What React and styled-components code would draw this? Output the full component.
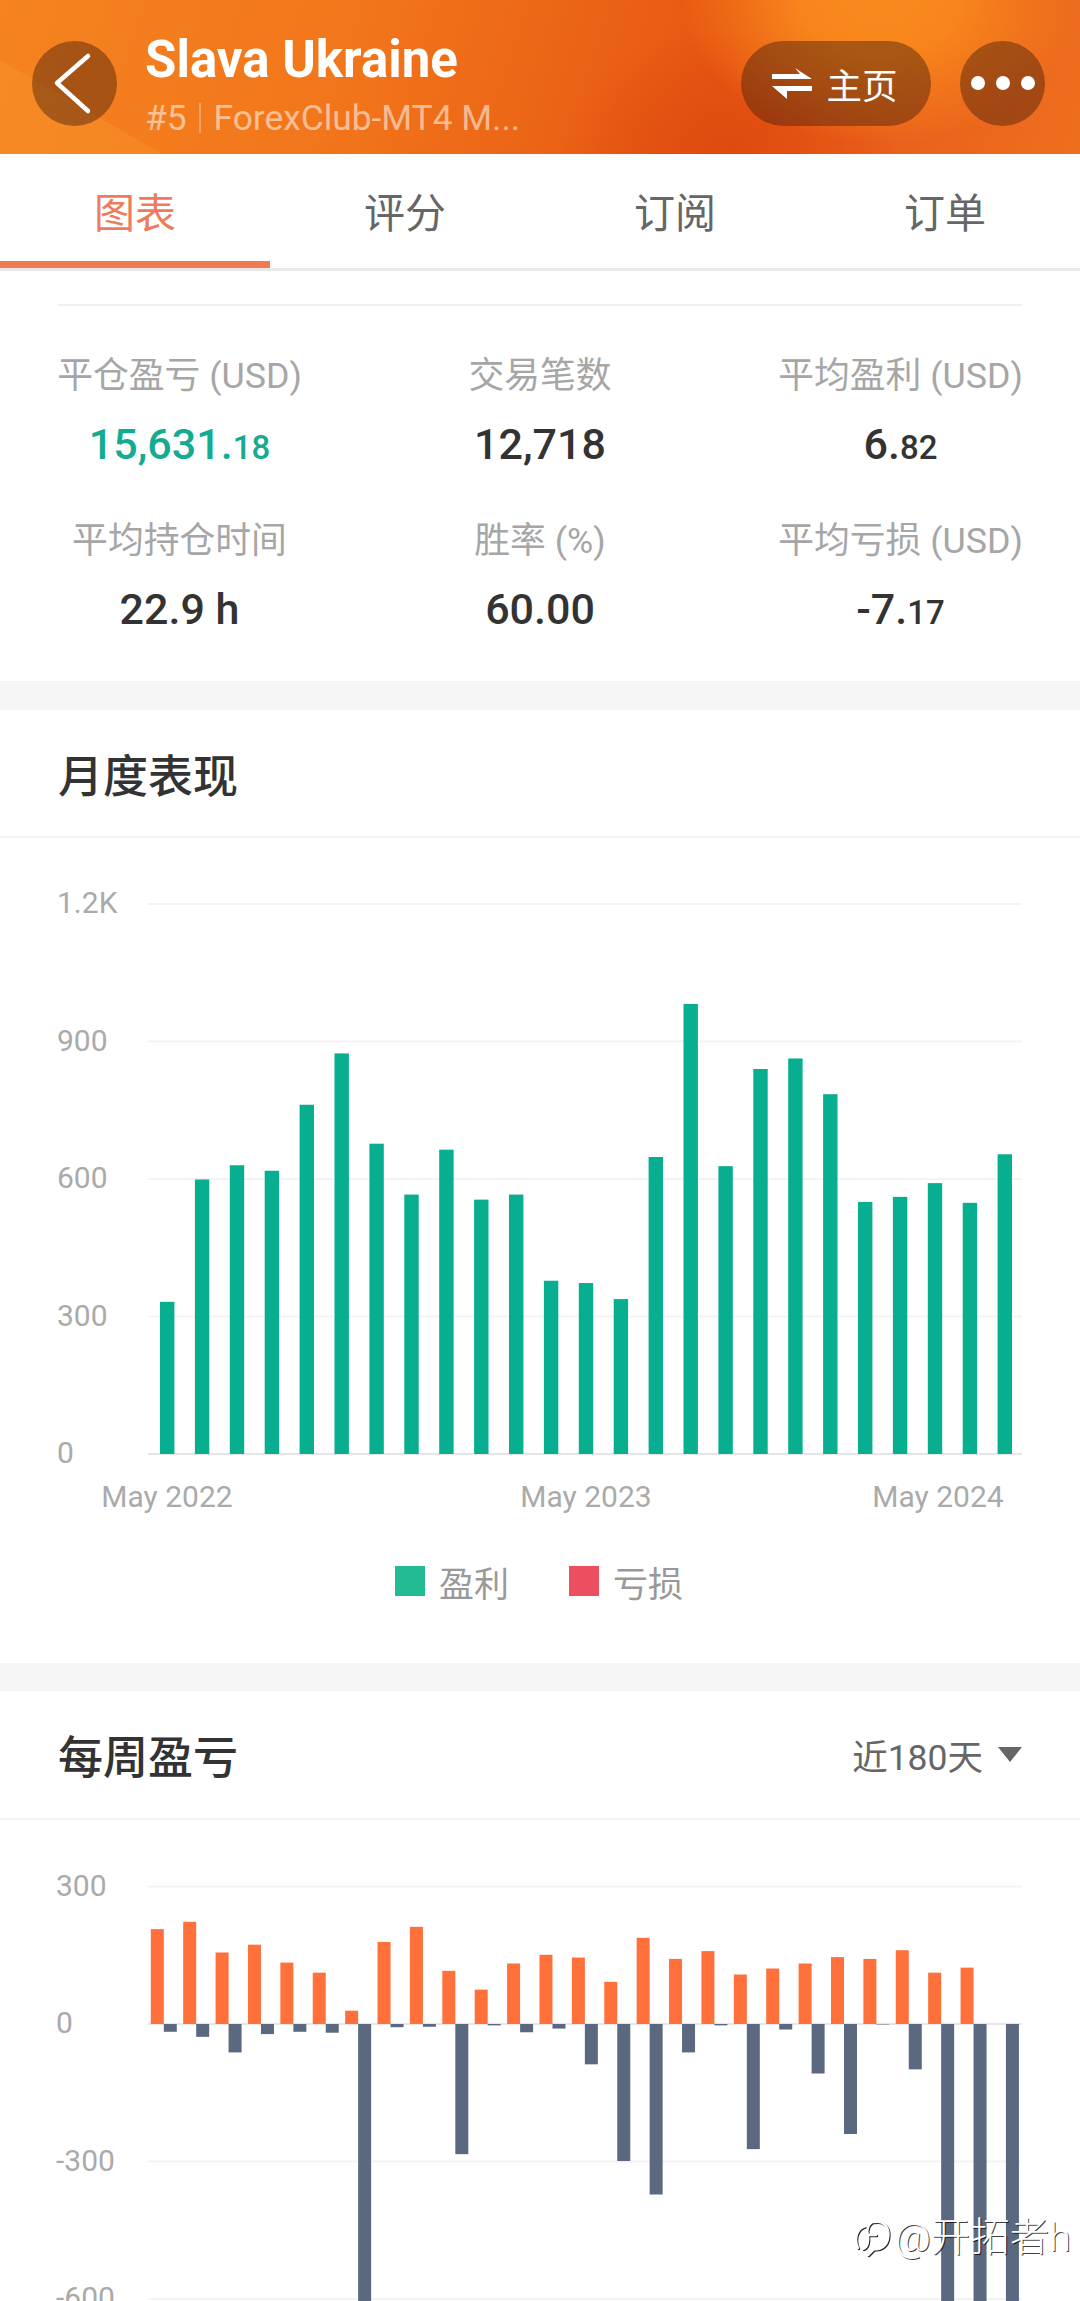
import React from 'react';
import styled, { createGlobalStyle } from 'styled-components';

const Global = createGlobalStyle`
  html, body { margin: 0; padding: 0; background: #fff; }
  body { font-family: Roboto, "Noto Sans CJK SC", sans-serif; }
`;

const Page = styled.div`
  position: relative;
  width: 1080px;
  height: 2301px;
  overflow: hidden;
  background: #fff;
  display: flex;
  flex-direction: column;
`;

const Header = styled.header`
  position: relative;
  height: 154px;
  flex: none;
  display: flex;
  align-items: center;
  padding: 12px 35px 0 32px;
  box-sizing: border-box;
  overflow: hidden;
  background:
    radial-gradient(ellipse 200px 150px at 880px -5px, #f98a1e 0%, #f8851c 40%, rgba(245,120,25,0) 100%),
    radial-gradient(ellipse 170px 120px at 730px 150px, #e04a0f 0%, rgba(226,78,16,0) 100%),
    linear-gradient(108deg, #f5831f 0%, #f2761b 32%, #eb6416 52%, #e65611 66%, #e9601a 82%, #ee6f1e 100%);
  &::before {
    content: '';
    position: absolute;
    inset: 0;
    background: rgba(255, 170, 60, 0.22);
    clip-path: polygon(0 60px, 162px 154px, 0 154px);
  }
`;

const RoundButton = styled.div`
  position: relative;
  flex: none;
  width: 85px;
  height: 85px;
  border-radius: 50%;
  background: rgba(70, 30, 10, 0.45);
  display: flex;
  align-items: center;
  justify-content: center;
  gap: 11px;
`;

const Dot = styled.span`
  width: 14px;
  height: 14px;
  border-radius: 50%;
  background: #fff;
`;

const TitleBlock = styled.div`
  position: relative;
  flex: 1;
  margin: 5px 0 0 28px;
  display: flex;
  flex-direction: column;
`;

const Title = styled.div`
  font-family: Roboto, sans-serif;
  font-size: 51px;
  line-height: 52px;
  font-weight: 700;
  color: #fff;
`;

const Subtitle = styled.div`
  display: flex;
  align-items: center;
  margin-top: 13px;
  font-family: Roboto, sans-serif;
  font-size: 35.3px;
  line-height: 38px;
  color: rgba(255, 255, 255, 0.55);
`;

const SubRule = styled.span`
  width: 2px;
  height: 30px;
  margin: 0 13px 0 12px;
  background: rgba(255, 255, 255, 0.3);
`;

const Pill = styled.div`
  position: relative;
  flex: none;
  width: 190px;
  height: 85px;
  margin-right: 29px;
  border-radius: 43px;
  background: rgba(70, 30, 10, 0.45);
  display: flex;
  align-items: center;
  justify-content: center;
  gap: 14px;
  padding-right: 2px;
  box-sizing: border-box;
  color: #fff;
  font-family: "Noto Sans CJK SC", sans-serif;
  font-size: 35.5px;
`;

const Tabs = styled.nav`
  flex: none;
  display: flex;
  height: 117px;
  box-sizing: border-box;
  border-bottom: 3px solid #e8e8e8;
`;

const Tab = styled.div`
  flex: 1;
  box-sizing: border-box;
  display: flex;
  justify-content: center;
  padding-top: 27px;
  font-family: "Noto Sans CJK SC", sans-serif;
  font-size: 41px;
  line-height: 58px;
  color: ${p => (p.$active ? '#ee7c5c' : '#666')};
  border-bottom: ${p => (p.$active ? '7px solid #f27a52' : 'none')};
`;

const Summary = styled.section`
  flex: none;
  height: 410px;
  box-sizing: border-box;
  padding: 33px 58px 0;
`;

const SummaryRule = styled.div`
  height: 2px;
  background: #f0f0f0;
`;

const StatGrid = styled.div`
  display: grid;
  grid-template-columns: 243px 1fr 243px;
  grid-template-rows: 165px 165px;
  padding-top: 45px;
  justify-items: center;
`;

const Stat = styled.div`
  display: flex;
  flex-direction: column;
  align-items: center;
`;

const StatLabel = styled.div`
  font-family: Roboto, "Noto Sans CJK SC", sans-serif;
  font-size: 35.8px;
  line-height: 50px;
  color: #a6a6a6;
  white-space: nowrap;
`;

const StatValue = styled.div`
  margin-top: 18px;
  font-family: Roboto, sans-serif;
  font-size: 43px;
  line-height: 50px;
  font-weight: 500;
  color: ${p => p.$color || '#333'};
  white-space: nowrap;
`;

const Decimal = styled.span`
  font-size: 33px;
`;

const Band = styled.div`
  flex: none;
  height: ${p => p.$h}px;
  background: #f5f5f5;
`;

const SectionHead = styled.div`
  flex: none;
  height: ${p => p.$h}px;
  box-sizing: border-box;
  padding: 0 58px;
  display: flex;
  align-items: center;
  justify-content: space-between;
  border-bottom: 2px solid #f3f3f3;
`;

const SectionTitle = styled.h2`
  margin: 0;
  font-family: "Noto Sans CJK SC", sans-serif;
  font-size: 45px;
  font-weight: 500;
  color: #333;
`;

const Range = styled.div`
  display: flex;
  align-items: center;
  gap: 15px;
  font-family: Roboto, "Noto Sans CJK SC", sans-serif;
  font-size: 35.5px;
  color: #666;
`;

const Caret = styled.span`
  width: 0;
  height: 0;
  border-left: 12px solid transparent;
  border-right: 12px solid transparent;
  border-top: 15px solid #666;
`;

const ChartSvg = styled.svg`
  display: block;
  flex: none;
`;

const Grid = styled.line`
  stroke: ${p => (p.$zero ? '#e6e6e6' : '#f4f4f4')};
  stroke-width: 2;
`;

const Bar = styled.rect`
  fill: ${p => p.$fill};
`;

const Axis = styled.text`
  font-family: Roboto, sans-serif;
  font-size: 30px;
  fill: #aaa;
`;

const Legend = styled.div`
  flex: none;
  display: flex;
  justify-content: center;
  gap: 60px;
  height: 133px;
  padding: 36px 2px 0 0;
  box-sizing: border-box;
`;

const LegendItem = styled.div`
  display: flex;
  align-items: center;
  gap: 14px;
  height: 30px;
  font-family: "Noto Sans CJK SC", sans-serif;
  font-size: 35px;
  color: #999;
`;

const Swatch = styled.span`
  width: 30px;
  height: 30px;
  background: ${p => p.$color};
`;

const Watermark = styled.div`
  position: absolute;
  right: 9px;
  top: 2213px;
  display: flex;
  align-items: center;
  gap: 5px;
  font-family: Roboto, "Noto Sans CJK SC", sans-serif;
  font-size: 39.5px;
  line-height: 50px;
  font-weight: 300;
  color: #fff;
  text-shadow: 1px 1px 0 rgba(0, 0, 0, 0.75);
`;

const WatermarkIcon = styled.svg`
  display: block;
  filter: drop-shadow(1px 1px 0 rgba(0, 0, 0, 0.85));
`;

const monthly = [332, 599, 630, 618, 762, 874, 677, 566, 664, 555, 566, 378, 373, 338, 648, 982, 628, 840, 863, 785, 550, 561, 591, 548, 654];
const weeklyProfit = [207, 223, 156, 173, 134, 112, 29, 179, 212, 116, 75, 132, 151, 145, 92, 188, 142, 159, 108, 121, 132, 146, 142, 161, 112, 123, 0];
const weeklyLoss = [17, 28, 62, 22, 17, 19, 900, 7, 6, 284, 3, 18, 10, 88, 299, 372, 62, 3, 273, 12, 108, 240, 1, 99, 900, 900, 900];

const PX_PER_UNIT = 137.5 / 300;

function MonthlyChart() {
  const zero = 616;
  return (
    <ChartSvg width="1080" height="692" viewBox="0 0 1080 692">
      {[['1.2K', 1200], ['900', 900], ['600', 600], ['300', 300], ['0', 0]].map(([label, v]) => {
        const y = zero - v * PX_PER_UNIT;
        return (
          <g key={label}>
            <Grid x1="148" x2="1022" y1={y} y2={y} $zero={v === 0} />
            <Axis x="57" y={y + 9}>{label}</Axis>
          </g>
        );
      })}
      {monthly.map((v, i) => (
        <Bar key={i} x={160 + i * 34.9} y={zero - v * PX_PER_UNIT} width="14.4" height={v * PX_PER_UNIT} $fill="#07ae90" />
      ))}
      <Axis x="167" y="669" textAnchor="middle">May 2022</Axis>
      <Axis x="586" y="669" textAnchor="middle">May 2023</Axis>
      <Axis x="938" y="669" textAnchor="middle">May 2024</Axis>
    </ChartSvg>
  );
}

function WeeklyChart() {
  const zero = 204;
  return (
    <ChartSvg width="1080" height="481" viewBox="0 0 1080 481">
      {[['300', 300], ['0', 0], ['-300', -300], ['-600', -600]].map(([label, v]) => {
        const y = zero - v * PX_PER_UNIT;
        return (
          <g key={label}>
            <Grid x1="148" x2="1022" y1={y} y2={y} $zero={v === 0} />
            <Axis x="56" y={y + 9}>{label}</Axis>
          </g>
        );
      })}
      {weeklyProfit.map((v, i) => (
        <Bar key={i} x={150.8 + i * 32.39} y={zero - v * PX_PER_UNIT} width="13" height={v * PX_PER_UNIT} $fill="#ff703b" />
      ))}
      {weeklyLoss.map((v, i) => (
        <Bar key={i} x={163.8 + i * 32.39} y={zero} width="13" height={v * PX_PER_UNIT} $fill="#5a6980" />
      ))}
    </ChartSvg>
  );
}

const Stats = [
  { label: '平仓盈亏 (USD)', value: '15,631.', dec: '18', color: '#14ab90' },
  { label: '交易笔数', value: '12,718' },
  { label: '平均盈利 (USD)', value: '6.', dec: '82' },
  { label: '平均持仓时间', value: '22.9 h' },
  { label: '胜率 (%)', value: '60.00' },
  { label: '平均亏损 (USD)', value: '-7.', dec: '17' },
];

export default function App() {
  return (
    <Page>
      <Global />
      <Header>
        <RoundButton>
          <svg width="85" height="85" viewBox="0 0 85 85" fill="none">
            <path d="M56 15 L25 42 L56 70" stroke="#fff" strokeWidth="4.5" strokeLinejoin="round" strokeLinecap="round" />
          </svg>
        </RoundButton>
        <TitleBlock>
          <Title>Slava Ukraine</Title>
          <Subtitle>#5<SubRule />ForexClub-MT4 M...</Subtitle>
        </TitleBlock>
        <Pill>
          <svg width="40" height="31" viewBox="0 0 40 31" fill="#fff">
            <path d="M0 6H28L23 0L40 11H0Z" />
            <path d="M0 18H40V23H15V31Z" />
          </svg>
          主页
        </Pill>
        <RoundButton>
          <Dot /><Dot /><Dot />
        </RoundButton>
      </Header>

      <Tabs>
        <Tab $active>图表</Tab>
        <Tab>评分</Tab>
        <Tab>订阅</Tab>
        <Tab>订单</Tab>
      </Tabs>

      <Summary>
        <SummaryRule />
        <StatGrid>
          {Stats.map(s => (
            <Stat key={s.label}>
              <StatLabel>{s.label}</StatLabel>
              <StatValue $color={s.color}>
                {s.value}
                {s.dec && <Decimal>{s.dec}</Decimal>}
              </StatValue>
            </Stat>
          ))}
        </StatGrid>
      </Summary>

      <Band $h={29} />
      <SectionHead $h={128}>
        <SectionTitle>月度表现</SectionTitle>
      </SectionHead>
      <MonthlyChart />
      <Legend>
        <LegendItem><Swatch $color="#22bb94" />盈利</LegendItem>
        <LegendItem><Swatch $color="#ec5060" />亏损</LegendItem>
      </Legend>

      <Band $h={28} />
      <SectionHead $h={129}>
        <SectionTitle>每周盈亏</SectionTitle>
        <Range>近180天<Caret /></Range>
      </SectionHead>
      <WeeklyChart />

      <Watermark>
        <WatermarkIcon width="36" height="40" viewBox="0 0 36 40" fill="none" stroke="#fff" strokeWidth="2.5" strokeLinecap="round">
          <path d="M4 30 C0 22 2 10 12 8" />
          <path d="M22 3 C14 4 12 12 14 18 C15 24 13 30 9 31" />
          <path d="M20 4 C30 2 36 10 34 20 C33 28 26 32 20 31 L14 37" />
          <path d="M14 17 H22" />
        </WatermarkIcon>
        @开拓者h
      </Watermark>
    </Page>
  );
}
